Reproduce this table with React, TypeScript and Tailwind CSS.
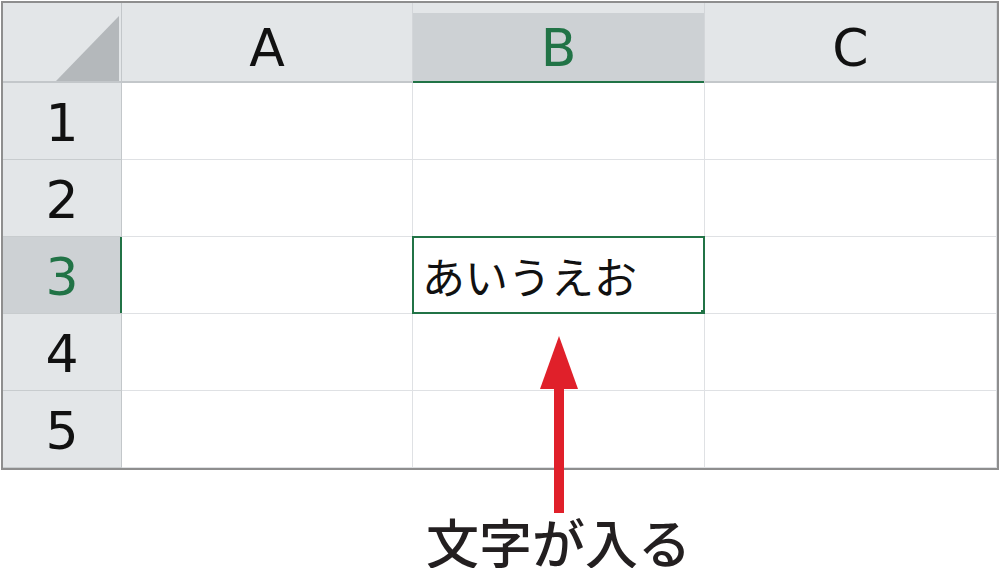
import type { ReactNode } from 'react';

const COLS = ['A', 'B', 'C'];
const ROWS = [1, 2, 3, 4, 5];
const SEL_COL = 'B';
const SEL_ROW = 3;

const latin = { fontFamily: '"DejaVu Sans", "Noto Sans", sans-serif' };
const jp = { fontFamily: '"Noto Sans CJK JP", "Noto Sans", sans-serif' };

function ColHeader({ label }: { label: string }) {
  const selected = label === SEL_COL;
  return (
    <div className="relative flex h-[80px] items-end border-r border-[#d3d6d9] border-b-2 border-b-[#c3c7ca] bg-[#e3e6e8]">
      <div
        className={`flex h-[68px] w-full items-center justify-center pt-[2px] text-[52px] leading-none ${
          selected ? 'bg-[#cdd1d4] text-[#217346]' : 'text-[#111]'
        }`}
        style={latin}
      >
        {label}
      </div>
      {selected && <div className="absolute inset-x-0 -bottom-[2px] h-[2px] bg-[#217346]" />}
    </div>
  );
}

function RowHeader({ n }: { n: number }) {
  const selected = n === SEL_ROW;
  return (
    <div
      className={`relative flex h-[77px] items-center justify-center border-r border-[#c3c7ca] border-b border-b-[#c8ccce] text-[52px] leading-none ${
        selected ? 'bg-[#cdd1d4] text-[#217346]' : 'bg-[#e3e6e8] text-[#111]'
      }`}
      style={latin}
    >
      <span className="pt-1">{n}</span>
      {selected && <div className="absolute inset-y-0 -right-px w-[2px] bg-[#217346]" />}
    </div>
  );
}

function Cell({ children, selected }: { children?: ReactNode; selected?: boolean }) {
  return (
    <div className="relative flex h-[77px] items-center border-r border-b border-[#dfe1e4] bg-white">
      {selected && (
        <div className="absolute -left-px -top-px -right-px -bottom-px border-2 border-[#217346]">
          <div className="absolute -bottom-[3px] -right-[3px] h-[5px] w-[5px] bg-[#217346]" />
        </div>
      )}
      {children}
    </div>
  );
}

export default function App() {
  return (
    <div className="relative w-[1000px] bg-white">
      {/* Sheet */}
      <div className="ml-px mt-[1px] w-[998px] border-2 border-[#8e8e8e]">
        <div className="grid grid-cols-[119px_291px_292px_292px]">
          <div className="relative h-[80px] border-r border-[#c3c7ca] border-b-2 border-b-[#c3c7ca] bg-[#e3e6e8]">
            <svg className="absolute left-0 top-0" width="119" height="80" viewBox="0 0 119 80">
              <polygon points="53,78 116,78 116,13" fill="#b4b8bb" />
            </svg>
          </div>
          {COLS.map((c) => (
            <ColHeader key={c} label={c} />
          ))}

          {ROWS.map((r) => (
            <div key={r} className="contents">
              <RowHeader n={r} />
              {COLS.map((c) => {
                const sel = r === SEL_ROW && c === SEL_COL;
                return (
                  <Cell key={c} selected={sel}>
                    {sel && (
                      <span className="pl-[9px] text-[43px] leading-none text-[#111]" style={jp}>
                        あいうえお
                      </span>
                    )}
                  </Cell>
                );
              })}
            </div>
          ))}
        </div>
      </div>

      {/* Arrow pointing at the cell */}
      <svg className="absolute left-[538px] top-[334px]" width="42" height="180" viewBox="0 0 42 180">
        <polygon points="21,1 40,54 2,54" fill="#e0202a" />
        <rect x="16" y="52" width="10" height="126" fill="#e0202a" />
      </svg>

      {/* Caption */}
      <div className="mt-[45px] pl-[426px] text-[53px] font-medium leading-none text-[#231f20]" style={jp}>
        文字が入る
      </div>
    </div>
  );
}
